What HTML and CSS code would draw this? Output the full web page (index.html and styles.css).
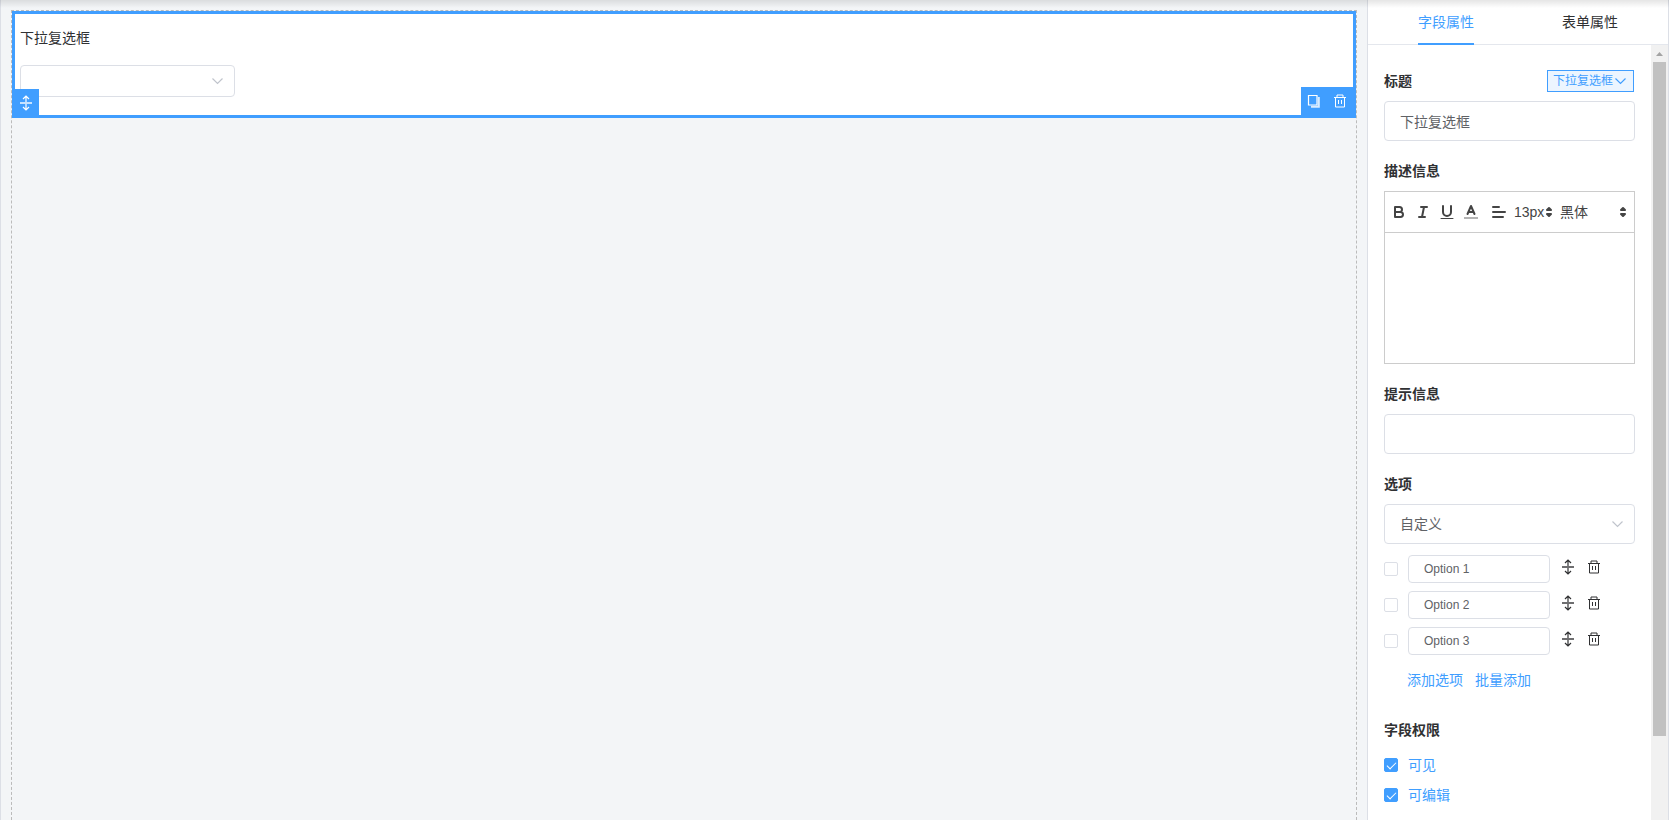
FILE: index.html
```html
<!DOCTYPE html>
<html lang="zh-CN">
<head>
  <meta charset="UTF-8">
  <title>表单设计</title>
  <meta name="viewport" content="width=device-width, initial-scale=1.0">
  <link rel="stylesheet" href="styles.css">
</head>
<body>
  <!-- shared icons -->
  <svg class="sprite" aria-hidden="true">
    <symbol id="arrow-down" viewBox="0 0 14 14">
      <path d="M1.500 4.500l5 5 5-5" fill="none" stroke="currentColor" stroke-width="1.200"/>
    </symbol>
    <symbol id="drag" viewBox="0 0 14 16">
      <path d="M1 8h12" fill="none" stroke="currentColor" stroke-width="2" opacity="0.7"/>
      <path d="M7 1v6M7 9v6M4 4l3-3 3 3M4 12l3 3 3-3" fill="none" stroke="currentColor" stroke-width="1.200"/>
    </symbol>
    <symbol id="trash" viewBox="0 0 14 14">
      <path d="M1 3.500h12M4 3.500v-2.500h6v2.500M2.500 3.500v9.500h9V3.500M5.500 6v4M8.500 6v4" fill="none" stroke="currentColor"/>
    </symbol>
    <symbol id="copy" viewBox="0 0 14 14">
      <path d="M1.500 1.500h8.500v9.500h-8.500z" fill="none" stroke="currentColor" stroke-width="1.200"/>
      <path d="M11.800 3v9.800H4" fill="none" stroke="currentColor" stroke-width="2" opacity="0.8"/>
    </symbol>
    <symbol id="updown" viewBox="0 0 18 18">
      <path d="M7 11l2 2 2-2zM7 7l2-2 2 2z" fill="currentColor" stroke="currentColor" stroke-width="2" stroke-linejoin="round"/>
    </symbol>
  </svg>

  <div class="designer">
    <main class="canvas-wrap">
      <div class="canvas">
        <div class="widget active">
          <label class="widget-label" for="field">下拉复选框</label>
          <div class="select select-small">
            <select id="field"><option></option></select>
            <svg class="caret"><use href="#arrow-down"/></svg>
          </div>
          <button class="widget-drag" aria-label="拖动"><svg><use href="#drag"/></svg></button>
          <div class="widget-actions">
            <button aria-label="复制"><svg><use href="#copy"/></svg></button>
            <button aria-label="删除"><svg><use href="#trash"/></svg></button>
          </div>
        </div>
      </div>
    </main>

    <aside class="panel">
      <nav class="tabs">
        <a href="#field-props" class="tab active">字段属性</a>
        <a href="#form-props" class="tab">表单属性</a>
      </nav>
      <div class="panel-body">
        <form class="props" id="field-props">
          <section class="group">
            <div class="group-head">
              <label for="title">标题</label>
              <button type="button" class="type-tag">下拉复选框<svg><use href="#arrow-down"/></svg></button>
            </div>
            <input class="input" id="title" type="text" value="下拉复选框">
          </section>

          <section class="group">
            <div class="group-head"><label for="desc">描述信息</label></div>
            <div class="editor">
              <div class="toolbar">
                <button type="button" aria-label="粗体"><svg viewBox="0 0 18 18">
                  <path d="M5 4h4.500a2.500 2.500 0 0 1 0 5H5zM5 9h5.500a2.500 2.500 0 0 1 0 5H5z"/>
                </svg></button>
                <button type="button" aria-label="斜体"><svg viewBox="0 0 18 18">
                  <path d="M7 4h6M5 14h6M8 14l2-10"/>
                </svg></button>
                <button type="button" aria-label="下划线"><svg viewBox="0 0 18 18">
                  <path d="M5 3v6a4 4 0 0 0 8 0V3"/>
                  <path class="thin" d="M3 15.500h12"/>
                </svg></button>
                <button type="button" aria-label="颜色"><svg viewBox="0 0 18 18">
                  <path class="swatch" d="M2 15h14"/>
                  <path d="M5.500 11L9 3l3.500 8M11.600 9H6.400"/>
                </svg></button>
                <button type="button" class="align" aria-label="对齐"><svg viewBox="0 0 18 18">
                  <path d="M3 9h12M3 14h10M3 4h6"/>
                </svg></button>
                <div class="picker size">
                  <select aria-label="字号"><option>13px</option></select>
                  <svg><use href="#updown"/></svg>
                </div>
                <div class="picker font">
                  <select aria-label="字体"><option>黑体</option></select>
                  <svg><use href="#updown"/></svg>
                </div>
              </div>
              <textarea id="desc"></textarea>
            </div>
          </section>

          <section class="group">
            <div class="group-head"><label for="tip">提示信息</label></div>
            <input class="input" id="tip" type="text">
          </section>

          <section class="group">
            <div class="group-head"><label for="source">选项</label></div>
            <div class="select">
              <select id="source"><option>自定义</option></select>
              <svg class="caret"><use href="#arrow-down"/></svg>
            </div>
            <ul class="options">
              <li>
                <input class="check" type="checkbox" aria-label="默认选中 1">
                <input class="input input-mini" type="text" value="Option 1" aria-label="选项 1">
                <button type="button" aria-label="拖动"><svg class="drag"><use href="#drag"/></svg></button>
                <button type="button" aria-label="删除"><svg><use href="#trash"/></svg></button>
              </li>
              <li>
                <input class="check" type="checkbox" aria-label="默认选中 2">
                <input class="input input-mini" type="text" value="Option 2" aria-label="选项 2">
                <button type="button" aria-label="拖动"><svg class="drag"><use href="#drag"/></svg></button>
                <button type="button" aria-label="删除"><svg><use href="#trash"/></svg></button>
              </li>
              <li>
                <input class="check" type="checkbox" aria-label="默认选中 3">
                <input class="input input-mini" type="text" value="Option 3" aria-label="选项 3">
                <button type="button" aria-label="拖动"><svg class="drag"><use href="#drag"/></svg></button>
                <button type="button" aria-label="删除"><svg><use href="#trash"/></svg></button>
              </li>
            </ul>
            <div class="links">
              <a href="#add">添加选项</a>
              <a href="#batch">批量添加</a>
            </div>
          </section>

          <section class="group rights">
            <div class="group-head"><h4>字段权限</h4></div>
            <label><input class="check" type="checkbox" checked>可见</label>
            <label><input class="check" type="checkbox" checked>可编辑</label>
          </section>
        </form>
        <div class="scrollbar">
          <svg viewBox="0 0 17 17"><path d="M5 11l3.500-4 3.500 4z" fill="#a3a3a3"/></svg>
          <div class="thumb"></div>
        </div>
      </div>
    </aside>
  </div>
</body>
</html>
```

FILE: styles.css
```css
* {
  box-sizing: border-box;
}
body {
  margin: 0;
  font-family: "Liberation Sans", "Noto Sans CJK SC", sans-serif;
  font-size: 14px;
  line-height: 20px;
  color: #303133;
}
button, input, select, textarea {
  font: inherit;
  color: inherit;
  margin: 0;
}
button {
  padding: 0;
  border: 0;
  background: none;
  cursor: pointer;
}
svg {
  display: block;
  width: 14px;
  height: 14px;
}
a {
  color: #409eff;
  text-decoration: none;
}
.sprite {
  position: absolute;
  width: 0;
  height: 0;
}

.designer {
  display: flex;
  height: 100vh;
  overflow: hidden;
  border-left: 1px solid #dcdfe6;
}
/* shadow thrown by the bar above */
.designer::before {
  content: "";
  position: absolute;
  top: 0;
  left: 0;
  right: 0;
  height: 8px;
  background: linear-gradient(rgba(0, 0, 0, 0.1), rgba(0, 0, 0, 0));
  pointer-events: none;
}

/* canvas */
.canvas-wrap {
  flex: 1;
  padding: 10px 10px 0;
  background: #f3f5f7;
}
.canvas {
  height: 100%;
  border: 1px dashed #bbb;
  border-bottom: 0;
}
.widget {
  position: relative;
  padding: 14px 5px 18px;
  border: 3px solid transparent;
  background: #fff;
}
.widget.active {
  border-color: #409eff;
}
.widget-label {
  display: block;
  margin-bottom: 17px;
}
.widget-drag,
.widget-actions {
  position: absolute;
  bottom: -3px;
  display: flex;
  align-items: center;
  justify-content: center;
  color: #fff;
  background: #409eff;
}
.widget-drag {
  left: -3px;
  width: 27px;
  height: 29px;
  padding-bottom: 1px;
}
.widget-drag svg {
  height: 16px;
}
.widget-actions {
  right: -3px;
  gap: 12px;
  width: 55px;
  height: 31px;
  padding: 0 3px 3px 0;
}

/* inputs */
.input {
  width: 100%;
  height: 40px;
  padding: 0 15px;
  border: 1px solid #dcdfe6;
  border-radius: 4px;
  color: #606266;
  background: #fff;
  outline: none;
}
.input-mini {
  width: 142px;
  height: 28px;
  font-size: 12px;
}
.select {
  position: relative;
}
.select select {
  appearance: none;
  display: block;
  width: 100%;
  height: 40px;
  padding: 0 30px 0 15px;
  border: 1px solid #dcdfe6;
  border-radius: 4px;
  color: #606266;
  background: #fff;
}
.select-small {
  width: 215px;
}
.select-small select {
  height: 32px;
}
.caret {
  position: absolute;
  top: 50%;
  right: 10px;
  margin-top: -7px;
  color: #c0c4cc;
  pointer-events: none;
}
.check {
  appearance: none;
  flex: none;
  display: grid;
  place-content: center;
  width: 14px;
  height: 14px;
  border: 1px solid #dcdfe6;
  border-radius: 2px;
  background: #fff;
}
.check:checked {
  border-color: #409eff;
  background: #409eff;
}
.check:checked::after {
  content: "";
  width: 8px;
  height: 4px;
  border: solid #fff;
  border-width: 0 0 1px 1px;
  transform: translateY(-1px) rotate(-45deg);
}

/* right panel */
.panel {
  display: flex;
  flex-direction: column;
  width: 302px;
  border: solid #dcdfe6;
  border-width: 0 1px;
  background: #fff;
}
.tabs {
  display: flex;
  justify-content: space-between;
  height: 45px;
  padding: 0 50px;
  border-bottom: 1px solid #e4e7ed;
}
.tab {
  height: 45px;
  line-height: 44px;
  color: #303133;
}
.tab.active {
  color: #409eff;
  border-bottom: 2px solid #409eff;
}
.panel-body {
  flex: 1;
  display: flex;
  min-height: 0;
}
.props {
  flex: 1;
  display: flex;
  flex-direction: column;
  gap: 20px;
  min-width: 0;
  padding: 26px 16px 0;
  overflow: hidden;
}
.group-head {
  display: flex;
  align-items: center;
  justify-content: space-between;
  height: 20px;
  margin-bottom: 10px;
  font-weight: 600;
}
.group-head h4 {
  margin: 0;
  font-size: 14px;
  font-weight: 600;
}
.type-tag {
  display: flex;
  align-items: center;
  height: 22px;
  margin-right: 1px;
  padding: 0 5px;
  border: 1px solid #409eff;
  font-size: 12px;
  font-weight: 400;
  color: #409eff;
  background: #ecf5ff;
}
.type-tag svg {
  margin-left: 1px;
}

/* rich text editor */
.editor {
  border: 1px solid #ccc;
}
.toolbar {
  display: flex;
  align-items: center;
  gap: 6px;
  height: 41px;
  padding: 0 2px 0 5px;
  border-bottom: 1px solid #ccc;
  color: #444;
}
.toolbar svg {
  width: 18px;
  height: 18px;
}
.toolbar path {
  fill: none;
  stroke: #444;
  stroke-width: 2;
  stroke-linecap: round;
  stroke-linejoin: round;
}
.toolbar .thin {
  stroke-width: 1;
}
.toolbar .swatch {
  stroke-linecap: butt;
  opacity: 0.4;
}
.toolbar .align {
  margin-left: 4px;
}
.picker {
  position: relative;
}
.picker select {
  appearance: none;
  display: block;
  width: 100%;
  padding: 0;
  border: 0;
  background: none;
}
.picker svg {
  position: absolute;
  top: 1px;
  right: 0;
  pointer-events: none;
}
.size {
  width: 44px;
}
.font {
  flex: 1;
  margin-left: -4px;
}
.editor textarea {
  display: block;
  width: 100%;
  height: 130px;
  padding: 12px 15px;
  border: 0;
  resize: none;
  outline: none;
}

/* option rows */
.options {
  display: flex;
  flex-direction: column;
  gap: 8px;
  margin: 11px 0 15px;
  padding: 0;
  list-style: none;
}
.options li {
  display: flex;
  align-items: center;
}
.options .input {
  margin: 0 11px 0 10px;
}
.options button {
  padding-bottom: 4px;
  margin-right: 12px;
}
.options .drag {
  height: 16px;
}
.links {
  display: flex;
  gap: 12px;
  padding-left: 23px;
}
.rights {
  padding-top: 10px;
}
.rights .group-head {
  margin-bottom: 15px;
}
.rights label {
  display: flex;
  align-items: center;
  gap: 10px;
  margin-bottom: 10px;
  color: #409eff;
}

.scrollbar {
  display: flex;
  flex-direction: column;
  width: 17px;
  background: #f1f1f1;
}
.scrollbar svg {
  width: 17px;
  height: 17px;
}
.thumb {
  height: 87%;
  margin: 0 2px;
  background: #c1c1c1;
}
```
